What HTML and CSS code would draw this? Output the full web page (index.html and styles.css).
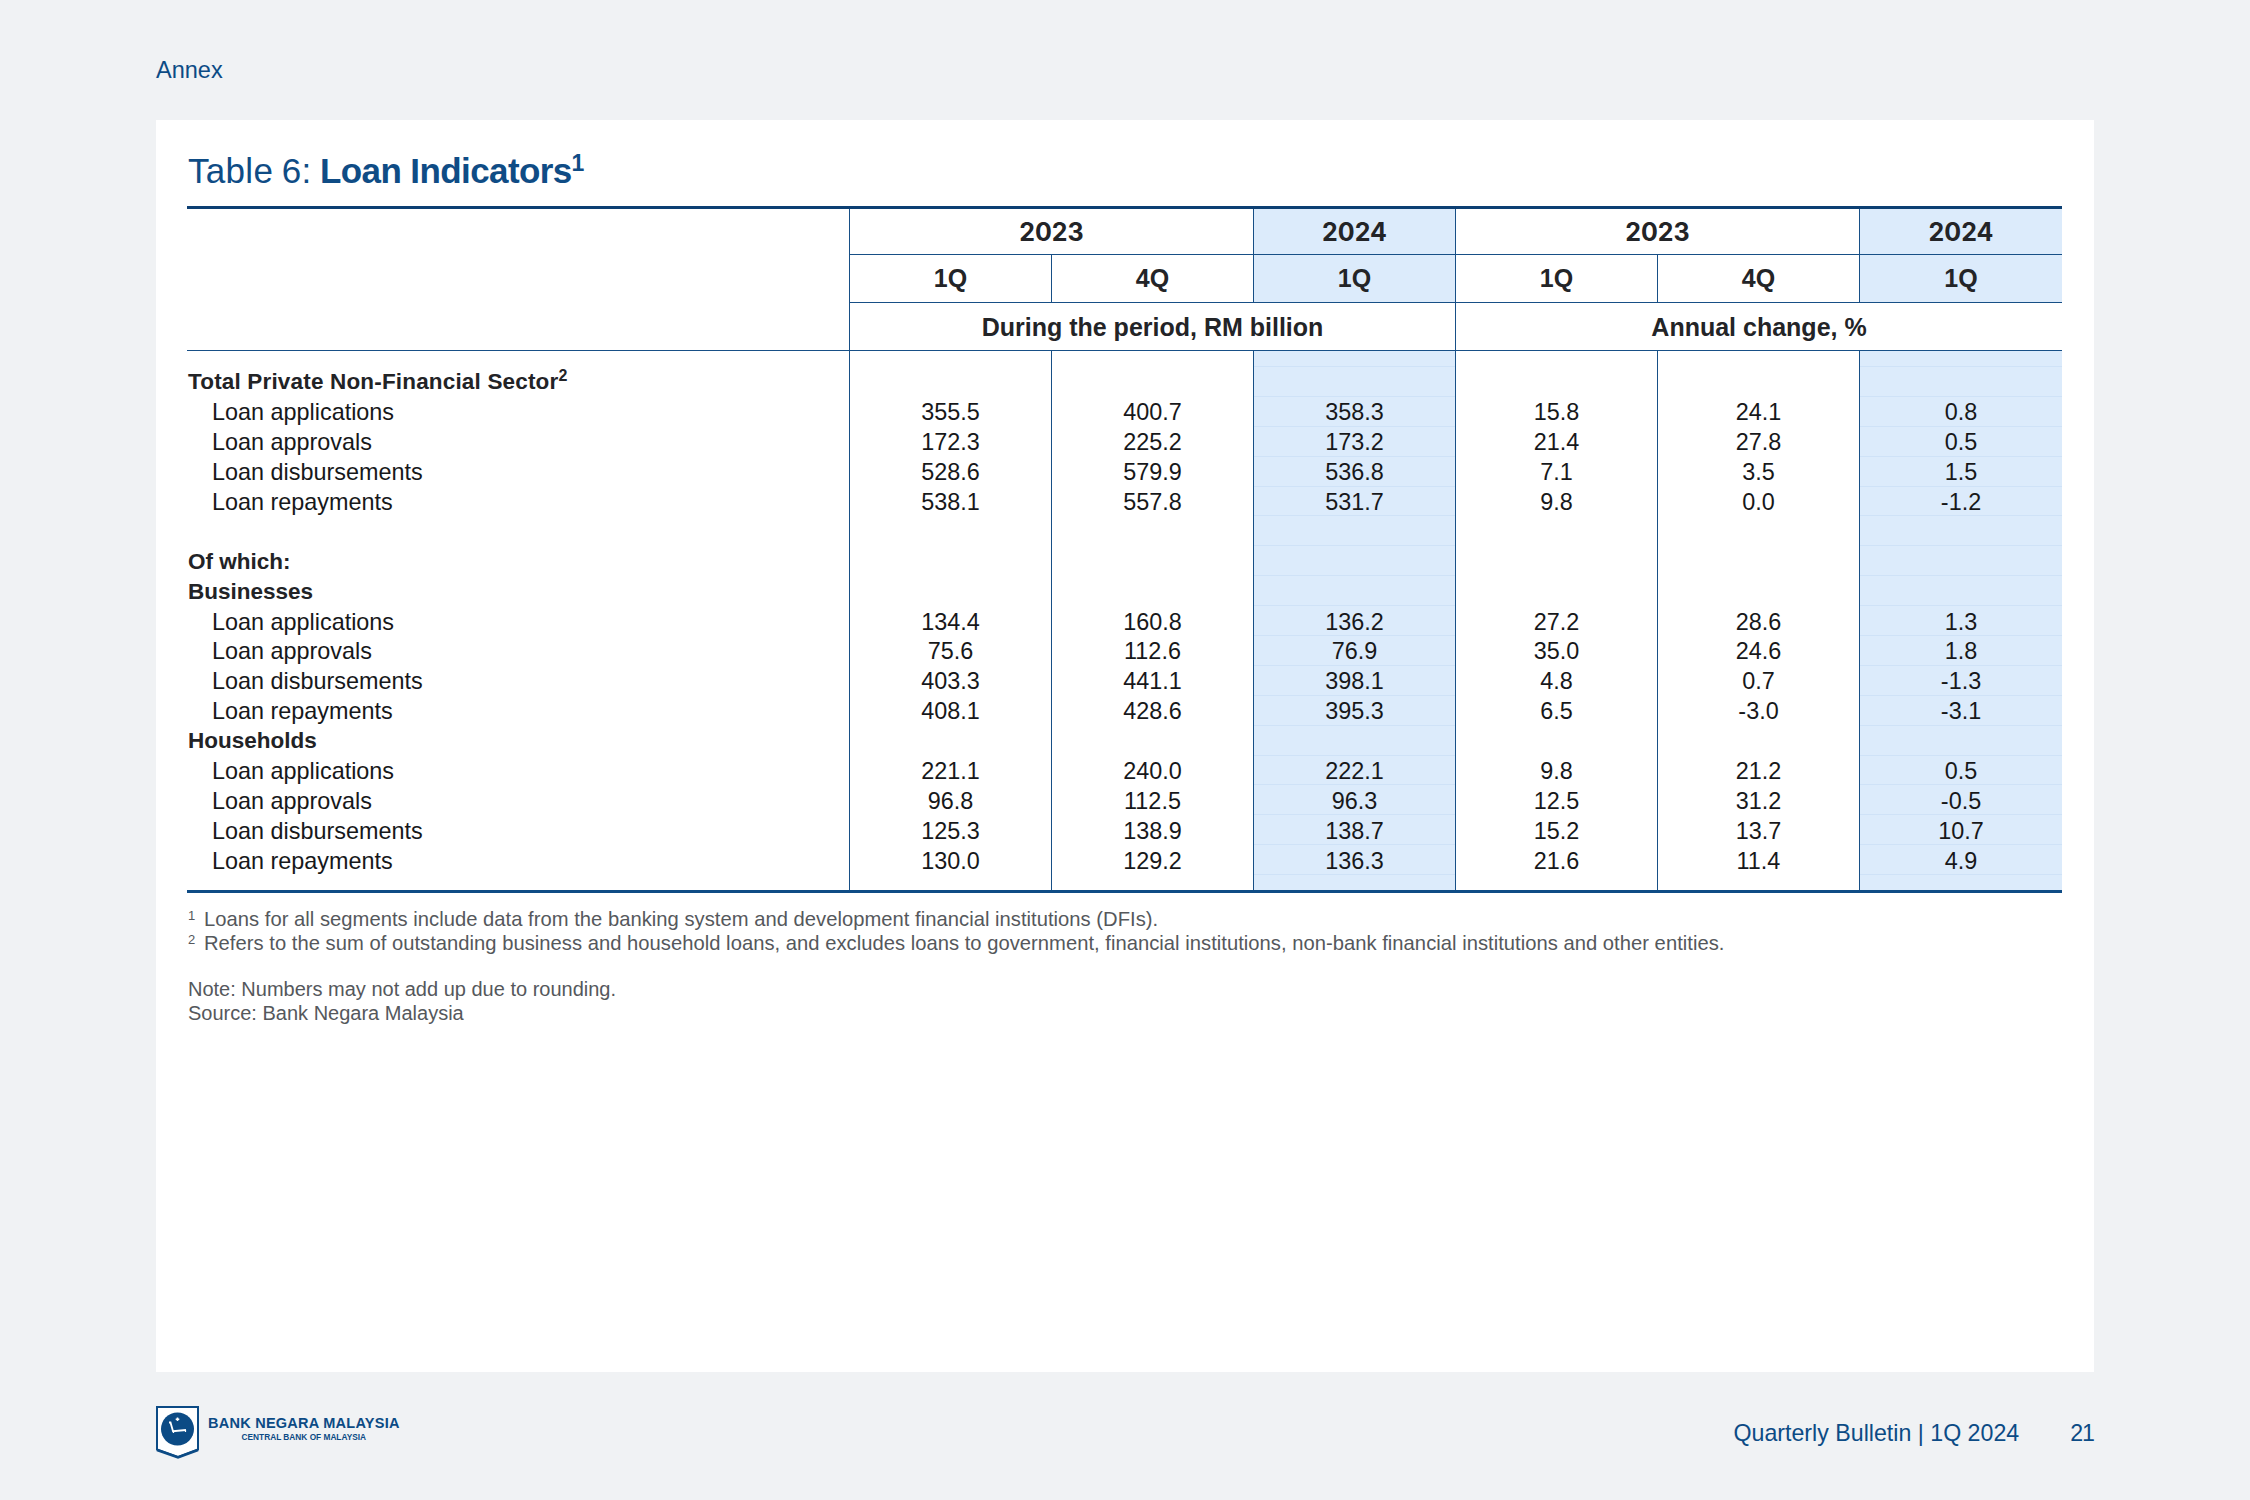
FILE: index.html
```html
<!DOCTYPE html>
<html lang="en">
<head>
<meta charset="utf-8">
<title>Table 6: Loan Indicators</title>
<link rel="stylesheet" href="styles.css">
</head>
<body>
<div class="page">
  <header class="top"><span class="annex">Annex</span></header>
  <main class="panel">
    <h1 class="title"><span class="t-reg">Table 6: </span><b>Loan Indicators</b><sup>1</sup></h1>
    <table class="data">
      <colgroup><col class="c-label"><col class="c-n"><col class="c-n"><col class="c-n"><col class="c-n"><col class="c-n"><col class="c-last"></colgroup>
      <thead>
        <tr class="years"><th rowspan="3" class="blank"></th><th colspan="2">2023</th><th class="hl">2024</th><th colspan="2">2023</th><th class="hl">2024</th></tr>
        <tr><th>1Q</th><th>4Q</th><th class="hl">1Q</th><th>1Q</th><th>4Q</th><th class="hl">1Q</th></tr>
        <tr class="units"><th colspan="3">During the period, RM billion</th><th colspan="3">Annual change, %</th></tr>
      </thead>
      <tbody>
        <tr class="pad-top"><td class="lab"></td><td></td><td></td><td class="hl"></td><td></td><td></td><td class="hl"></td></tr>
        <tr><td class="lab strong wide">Total Private Non-Financial Sector<sup>2</sup></td><td></td><td></td><td class="hl"></td><td></td><td></td><td class="hl"></td></tr>
        <tr><td class="lab sub">Loan applications</td><td>355.5</td><td>400.7</td><td class="hl">358.3</td><td>15.8</td><td>24.1</td><td class="hl">0.8</td></tr>
        <tr><td class="lab sub">Loan approvals</td><td>172.3</td><td>225.2</td><td class="hl">173.2</td><td>21.4</td><td>27.8</td><td class="hl">0.5</td></tr>
        <tr><td class="lab sub">Loan disbursements</td><td>528.6</td><td>579.9</td><td class="hl">536.8</td><td>7.1</td><td>3.5</td><td class="hl">1.5</td></tr>
        <tr><td class="lab sub">Loan repayments</td><td>538.1</td><td>557.8</td><td class="hl">531.7</td><td>9.8</td><td>0.0</td><td class="hl">-1.2</td></tr>
        <tr><td class="lab"></td><td></td><td></td><td class="hl"></td><td></td><td></td><td class="hl"></td></tr>
        <tr><td class="lab strong">Of which:</td><td></td><td></td><td class="hl"></td><td></td><td></td><td class="hl"></td></tr>
        <tr><td class="lab strong">Businesses</td><td></td><td></td><td class="hl"></td><td></td><td></td><td class="hl"></td></tr>
        <tr><td class="lab sub">Loan applications</td><td>134.4</td><td>160.8</td><td class="hl">136.2</td><td>27.2</td><td>28.6</td><td class="hl">1.3</td></tr>
        <tr><td class="lab sub">Loan approvals</td><td>75.6</td><td>112.6</td><td class="hl">76.9</td><td>35.0</td><td>24.6</td><td class="hl">1.8</td></tr>
        <tr><td class="lab sub">Loan disbursements</td><td>403.3</td><td>441.1</td><td class="hl">398.1</td><td>4.8</td><td>0.7</td><td class="hl">-1.3</td></tr>
        <tr><td class="lab sub">Loan repayments</td><td>408.1</td><td>428.6</td><td class="hl">395.3</td><td>6.5</td><td>-3.0</td><td class="hl">-3.1</td></tr>
        <tr><td class="lab strong">Households</td><td></td><td></td><td class="hl"></td><td></td><td></td><td class="hl"></td></tr>
        <tr><td class="lab sub">Loan applications</td><td>221.1</td><td>240.0</td><td class="hl">222.1</td><td>9.8</td><td>21.2</td><td class="hl">0.5</td></tr>
        <tr><td class="lab sub">Loan approvals</td><td>96.8</td><td>112.5</td><td class="hl">96.3</td><td>12.5</td><td>31.2</td><td class="hl">-0.5</td></tr>
        <tr><td class="lab sub">Loan disbursements</td><td>125.3</td><td>138.9</td><td class="hl">138.7</td><td>15.2</td><td>13.7</td><td class="hl">10.7</td></tr>
        <tr><td class="lab sub">Loan repayments</td><td>130.0</td><td>129.2</td><td class="hl">136.3</td><td>21.6</td><td>11.4</td><td class="hl">4.9</td></tr>
        <tr class="pad-bot"><td class="lab"></td><td></td><td></td><td class="hl"></td><td></td><td></td><td class="hl"></td></tr>
      </tbody>
    </table>
    <div class="notes">
      <p class="fn"><sup>1</sup><span>Loans for all segments include data from the banking system and development financial institutions (DFIs).</span></p>
      <p class="fn"><sup>2</sup><span>Refers to the sum of outstanding business and household loans, and excludes loans to government, financial institutions, non-bank financial institutions and other entities.</span></p>
      <p class="note first">Note: Numbers may not add up due to rounding.</p>
      <p class="note">Source: Bank Negara Malaysia</p>
    </div>
  </main>
  <footer class="foot">
    <div class="logo">
      <svg class="crest" width="44" height="53" viewBox="0 0 44 53" aria-hidden="true">
        <path d="M1 1H42V43.500L22 51L1 43.500Z" fill="#fff" stroke="#0c4b85" stroke-width="2"/>
        <path d="M1 44L22 51.500L42 44" fill="none" stroke="#0c4b85" stroke-width="2.500"/>
        <circle cx="21.500" cy="23" r="16.500" fill="#0c4b85"/>
        <path d="M13 16.500H14.500L17 25.200L30 24" fill="none" stroke="#fff" stroke-width="1.800"/>
        <path d="M17.500 25V27M29.500 24V26" stroke="#fff" stroke-width="1.200"/>
        <path d="M20.700 11.500h1.600v1h1v1.600h-1v1h-1.600v-1h-1v-1.600h1Z" fill="#fff"/>
      </svg>
      <div class="wordmark">
        <span class="wm-main">BANK NEGARA MALAYSIA</span>
        <span class="wm-sub">CENTRAL BANK OF MALAYSIA</span>
      </div>
    </div>
    <div class="pub"><span>Quarterly Bulletin | 1Q 2024</span><span class="num">21</span></div>
  </footer>
</div>
</body>
</html>
```

FILE: styles.css
```css
* { box-sizing: border-box; }
html, body { margin: 0; padding: 0; }
body { background: #f0f2f4; font-family: "Liberation Sans", Arial, sans-serif; color: #222326; overflow: hidden; }
.page { width: 2250px; height: 1500px; padding: 0 156px; display: flex; flex-direction: column; overflow: hidden; }
.top { height: 120px; padding-top: 57px; }
.annex { font-size: 23.500px; line-height: 26px; color: #0c4b85; display: block; }
.panel { background: #fff; height: 1252px; padding: 26px 32px 0 31px; }
.title { margin: 0; height: 60px; padding-left: 1px; font-size: 35px; line-height: 50px; font-weight: 400; color: #0f4c85; }
.t-reg { letter-spacing: 0.3px; word-spacing: -1.500px; }
.title b { font-weight: 700; letter-spacing: -0.600px; }
.title sup { font-size: 23px; font-weight: 700; line-height: 0; vertical-align: 12px; }
.data { table-layout: fixed; width: 1875px; border-collapse: separate; border-spacing: 0; border-top: 3px solid #0c3f73; border-bottom: 3px solid #0f4c85; }
.c-label { width: 662px; }
.c-n { width: 202px; }
.c-last { width: 203px; }
.data th { height: 48px; padding: 0; font-size: 25px; font-weight: 700; text-align: center; border-left: 1px solid #174f86; border-bottom: 1px solid #174f86; color: #232427; }
.data .units th { padding-top: 2px; }
.data .years th { height: 46px; font-family: Inter, "Liberation Sans", sans-serif; font-size: 25px; }
.data th.blank { border-left: 0; }
.data td { height: 29.900px; padding: 2px 0 0; font-size: 23.400px; text-align: center; border-left: 1px solid #174f86; color: #17181a; }
.data td.lab { border-left: 0; text-align: left; padding-left: 1px; }
.data td.sub { padding-left: 25px; }
.data td.strong { padding-top: 1px; font-weight: 700; font-size: 22.500px; color: #222326; }
.data td.wide { letter-spacing: 0.170px; }
.data td.strong sup { font-size: 16px; line-height: 0; vertical-align: 8px; }
.data .hl { background: #dcebfb; }
.data td.hl { box-shadow: inset 0 -1px 0 #cfe2f7; }
.data .pad-top td { height: 16px; padding: 0; }
.data .pad-bot td { height: 15px; padding: 0; box-shadow: none; }
.notes { padding-top: 14px; font-size: 20.200px; line-height: 24px; color: #55585c; }
.notes p { margin: 0; }
.fn { display: flex; padding-left: 1px; letter-spacing: 0.025px; }
.fn sup { width: 16px; font-size: 13px; line-height: 18px; vertical-align: baseline; }
.note { padding-left: 1px; font-size: 20px; }
.note.first { margin-top: 22px; }
.foot { flex: 1; display: flex; justify-content: space-between; align-items: flex-start; padding-top: 34px; }
.logo { display: flex; gap: 8px; }
.crest { display: block; }
.wordmark { display: flex; flex-direction: column; align-items: center; padding-top: 9px; color: #0c4b85; font-weight: 700; }
.wm-main { font-size: 14.500px; line-height: 16px; letter-spacing: 0.250px; }
.wm-sub { font-size: 8.300px; line-height: 12px; }
.pub { display: flex; gap: 51px; font-size: 23.200px; line-height: 28px; color: #0c4b85; padding-top: 13px; }
.num { letter-spacing: -1px; }
```
